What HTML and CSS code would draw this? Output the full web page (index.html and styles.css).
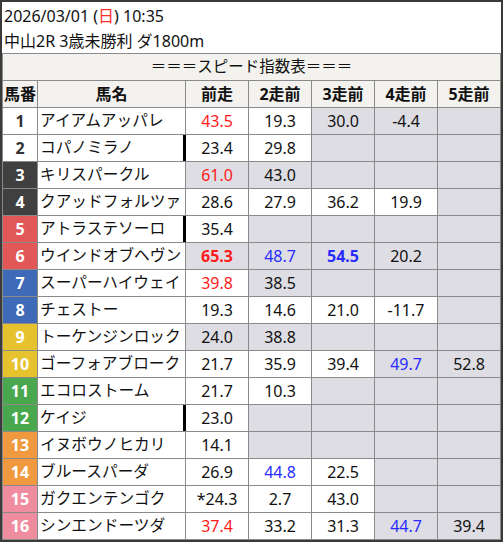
FILE: index.html
```html
<!DOCTYPE html>
<html lang="ja">
<head>
<meta charset="utf-8">
<link rel="stylesheet" href="styles.css">
</head>
<body>
<div class="frame">
  <div class="info">
    <div>2026/03/01 (<span class="sun">日</span>) 10:35</div>
    <div>中山2R 3歳未勝利 ダ1800m</div>
  </div>
  <div class="grid">
    <div class="title">＝＝＝スピード指数表＝＝＝</div>
    <div class="hd">馬番</div><div class="hd">馬名</div><div class="hd">前走</div><div class="hd">2走前</div><div class="hd">3走前</div><div class="hd">4走前</div><div class="hd">5走前</div>

    <div class="num w">1</div><div class="name">アイアムアッパレ</div><div class="v red">43.5</div><div class="v">19.3</div><div class="v gy">30.0</div><div class="v gy">-4.4</div><div class="v gy"></div>
    <div class="num w">2</div><div class="name">コパノミラノ</div><div class="v bar">23.4</div><div class="v">29.8</div><div class="v gy"></div><div class="v gy"></div><div class="v gy"></div>
    <div class="num k">3</div><div class="name">キリスパークル</div><div class="v gy red">61.0</div><div class="v gy">43.0</div><div class="v gy"></div><div class="v gy"></div><div class="v gy"></div>
    <div class="num k">4</div><div class="name">クアッドフォルツァ</div><div class="v">28.6</div><div class="v">27.9</div><div class="v">36.2</div><div class="v">19.9</div><div class="v gy"></div>
    <div class="num r">5</div><div class="name">アトラステソーロ</div><div class="v bar">35.4</div><div class="v gy"></div><div class="v gy"></div><div class="v gy"></div><div class="v gy"></div>
    <div class="num r">6</div><div class="name">ウインドオブヘヴン</div><div class="v gy red bold">65.3</div><div class="v gy blue">48.7</div><div class="v gy blue bold">54.5</div><div class="v gy">20.2</div><div class="v gy"></div>
    <div class="num b">7</div><div class="name">スーパーハイウェイ</div><div class="v red">39.8</div><div class="v gy">38.5</div><div class="v gy"></div><div class="v gy"></div><div class="v gy"></div>
    <div class="num b">8</div><div class="name">チェストー</div><div class="v">19.3</div><div class="v">14.6</div><div class="v">21.0</div><div class="v">-11.7</div><div class="v gy"></div>
    <div class="num y">9</div><div class="name">トーケンジンロック</div><div class="v gy">24.0</div><div class="v gy">38.8</div><div class="v gy"></div><div class="v gy"></div><div class="v gy"></div>
    <div class="num y">10</div><div class="name">ゴーフォアブローク</div><div class="v">21.7</div><div class="v">35.9</div><div class="v">39.4</div><div class="v gy blue">49.7</div><div class="v gy">52.8</div>
    <div class="num g">11</div><div class="name">エコロストーム</div><div class="v">21.7</div><div class="v">10.3</div><div class="v gy"></div><div class="v gy"></div><div class="v gy"></div>
    <div class="num g">12</div><div class="name">ケイジ</div><div class="v bar">23.0</div><div class="v gy"></div><div class="v gy"></div><div class="v gy"></div><div class="v gy"></div>
    <div class="num o">13</div><div class="name">イヌボウノヒカリ</div><div class="v">14.1</div><div class="v gy"></div><div class="v gy"></div><div class="v gy"></div><div class="v gy"></div>
    <div class="num o">14</div><div class="name">ブルースパーダ</div><div class="v">26.9</div><div class="v blue">44.8</div><div class="v">22.5</div><div class="v gy"></div><div class="v gy"></div>
    <div class="num p">15</div><div class="name">ガクエンテンゴク</div><div class="v">*24.3</div><div class="v">2.7</div><div class="v">43.0</div><div class="v gy"></div><div class="v gy"></div>
    <div class="num p">16</div><div class="name">シンエンドーツダ</div><div class="v red">37.4</div><div class="v">33.2</div><div class="v">31.3</div><div class="v gy blue">44.7</div><div class="v gy">39.4</div>
  </div>
</div>
</body>
</html>
```
FILE: styles.css
```css
html, body {
  margin: 0;
  padding: 0;
  background: #ffffff;
}
body {
  font-family: "Noto Sans", "Noto Sans CJK JP", sans-serif;
  font-size: 16px;
  color: #111;
}
.frame {
  width: 503px;
  height: 542px;
  box-sizing: border-box;
  border: 2px solid #3a3a3a;
  background: #fff;
  display: flex;
  flex-direction: column;
}
.info {
  height: 51px;
  box-sizing: border-box;
  padding: 2px 0 0 2px;
  line-height: 25px;
  overflow: hidden;
}
.sun { color: #ff3030; }
.grid {
  display: grid;
  grid-template-columns: 34px 147px 62px 62px 62px 62px 62px;
  grid-auto-rows: 26px;
  gap: 1px;
  padding: 1px;
  background: #8a8a8a;
}
.grid > div {
  display: flex;
  align-items: center;
  justify-content: center;
  line-height: 1;
  background: #fff;
  white-space: nowrap;
}
.grid > .title {
  grid-column: 1 / -1;
  background: #f3f2ee;
  font-size: 15.5px;
}
.grid > .hd {
  background: #f3f2ee;
  font-weight: bold;
}
.grid > .num {
  font-weight: bold;
  color: #fff;
}
.grid > .num.w { background: #fff; color: #333; }
.grid > .num.k { background: #404040; }
.grid > .num.r { background: #e25757; }
.grid > .num.b { background: #3f6ab7; }
.grid > .num.y { background: #e6c22f; }
.grid > .num.g { background: #49a84e; }
.grid > .num.o { background: #f0993e; }
.grid > .num.p { background: #f08c9f; }
.grid > .name {
  justify-content: flex-start;
  padding-left: 2px;
  font-size: 15.7px;
}
.grid > .gy { background: #dddde3; }
.red { color: #ff1a1a; }
.blue { color: #2a2aff; }
.bold { font-weight: bold; }
.grid > .bar { box-shadow: -3px 0 0 #000; }
```
